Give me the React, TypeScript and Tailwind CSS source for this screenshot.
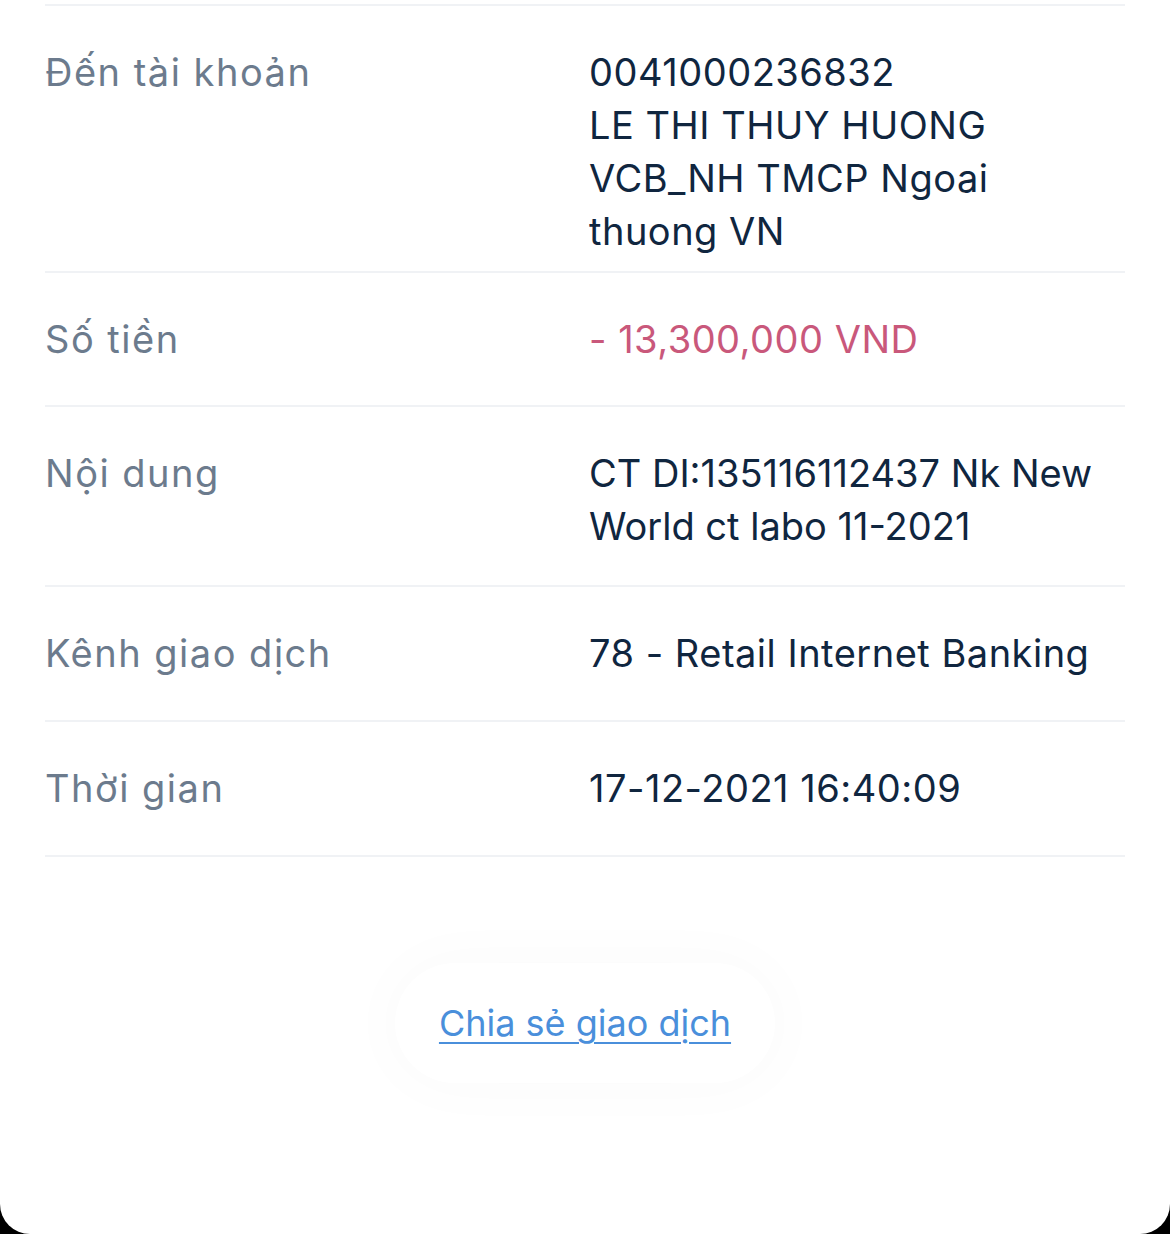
import React from "react";

const font = { fontFamily: "Inter, 'Noto Sans', sans-serif" };

function Row({
  label,
  children,
  pad,
}: {
  label: string;
  children: React.ReactNode;
  pad: string;
}) {
  return (
    <div className={`grid grid-cols-[544px_1fr] border-b-2 border-[#f0f2f5] ${pad}`}>
      <div className="text-[#6c7b8d] text-[38px] leading-[53px] tracking-[1.5px] whitespace-nowrap">{label}</div>
      <div className="text-[#10263f] text-[38px] leading-[53px] tracking-[0.5px] whitespace-nowrap">{children}</div>
    </div>
  );
}

export default function App() {
  return (
    <div className="w-[1170px] h-[1234px] bg-black" style={font}>
      <div className="w-full h-full bg-white rounded-b-[30px] overflow-hidden">
        <div className="mx-[45px] pt-[4px]">
          <div className="h-[2px] bg-[#f0f2f5]" />
          <Row label="Đến tài khoản" pad="pt-[40px] pb-[13px]">
            0041000236832
            <br />
            LE THI THUY HUONG
            <br />
            VCB_NH TMCP Ngoai
            <br />
            thuong VN
          </Row>
          <Row label="Số tiền" pad="pt-[40px] pb-[39px]">
            <span className="text-[#c9587b]">- 13,300,000 VND</span>
          </Row>
          <Row label="Nội dung" pad="pt-[40px] pb-[32px]">
            <span className="tracking-[0px]">
              CT DI:135116112437 Nk New
              <br />
              World ct labo 11-2021
            </span>
          </Row>
          <Row label="Kênh giao dịch" pad="pt-[40px] pb-[40px]">
            78 - Retail Internet Banking
          </Row>
          <Row label="Thời gian" pad="pt-[40px] pb-[40px]">
            17-12-2021 16:40:09
          </Row>
        </div>
        <div className="flex justify-center pt-[106px]">
          <div className="w-[380px] h-[120px] rounded-full bg-white shadow-[0_0_60px_8px_rgba(0,0,0,0.02)] flex items-center justify-center">
            <span className="text-[#4a8fdb] text-[36px] underline underline-offset-[6px] decoration-[2px]">
              Chia sẻ giao dịch
            </span>
          </div>
        </div>
      </div>
    </div>
  );
}
